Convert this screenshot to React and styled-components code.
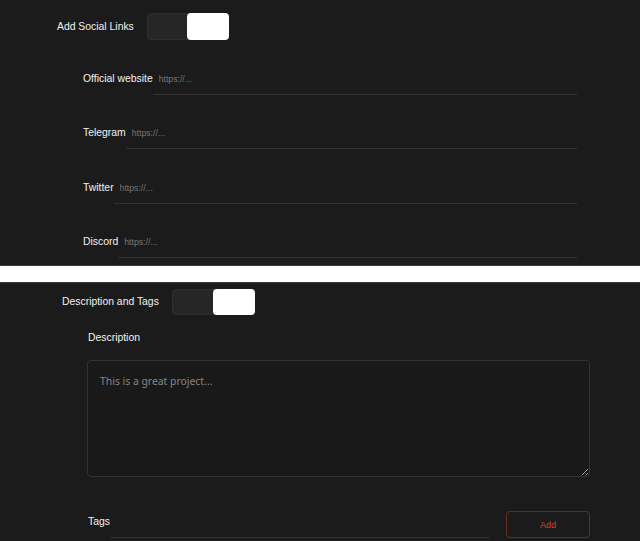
import React from "react";
import styled, { createGlobalStyle } from "styled-components";

const GlobalStyle = createGlobalStyle`
  html, body {
    margin: 0;
    padding: 0;
    background: #ffffff;
  }
  body {
    font-family: "Liberation Sans", Arial, sans-serif;
  }
`;

const Page = styled.div`
  width: 640px;
  display: flex;
  flex-direction: column;
  gap: 18px;
`;

const Panel = styled.section`
  background: #1b1b1b;
  display: flex;
  flex-direction: column;
  padding: ${(p) => p.$padding};
  height: ${(p) => p.$height};
  box-sizing: border-box;
  box-shadow: 0 0 0 1px #3a3a3a;
`;

const Header = styled.div`
  display: flex;
  align-items: center;
  gap: 13px;
`;

const HeaderTitle = styled.span`
  color: #f2f2f2;
  font-size: 10.4px;
  line-height: 12px;
`;

const Toggle = styled.div`
  width: ${(p) => p.$width}px;
  height: ${(p) => p.$height}px;
  box-sizing: border-box;
  background: #262626;
  border: 1px solid #2f2f2f;
  border-radius: 4px;
  display: flex;
  justify-content: flex-end;
`;

const Knob = styled.div`
  width: 52%;
  background: #ffffff;
  border-radius: 4px;
  margin: -1px -1px -1px 0;
  height: calc(100% + 2px);
`;

const LinkList = styled.div`
  display: flex;
  flex-direction: column;
  gap: 32.3px;
  margin-top: 33px;
  padding: 0 63px 0 26px;
`;

const LinkRow = styled.label`
  display: flex;
  align-items: flex-start;
`;

const LinkLabel = styled.span`
  color: #f2f2f2;
  font-size: 10.4px;
  line-height: 12px;
  white-space: nowrap;
`;

const LineInput = styled.input`
  flex: 1;
  min-width: 0;
  background: transparent;
  border: none;
  border-bottom: 1px solid #333333;
  outline: none;
  color: #dddddd;
  font-family: "Liberation Sans", Arial, sans-serif;
  font-size: 8.7px;
  line-height: 12px;
  height: 22px;
  box-sizing: border-box;
  padding: 0 6px 9px;

  &::placeholder {
    color: #777777;
  }
`;

const SubLabel = styled.div`
  color: #f2f2f2;
  font-size: 10.4px;
  line-height: 12px;
  margin: ${(p) => p.$margin};
`;

const TextArea = styled.textarea`
  display: block;
  width: 503px;
  height: 117px;
  box-sizing: border-box;
  margin-left: 25px;
  background: #191919;
  border: 1px solid #333333;
  border-radius: 4px;
  padding: 13px 12px;
  color: #dddddd;
  font-family: "Noto Sans", "Open Sans", sans-serif;
  font-size: 10.4px;
  line-height: 14px;
  outline: none;

  &::placeholder {
    color: #858585;
  }
`;

const TagsRow = styled.div`
  display: flex;
  align-items: flex-end;
  margin-top: 34px;
  padding-left: 26px;
  width: 528px;
  box-sizing: border-box;
`;

const TagsLabel = styled.span`
  color: #f2f2f2;
  font-size: 10.4px;
  line-height: 12px;
  padding-bottom: 10px;
`;

const TagInput = styled(LineInput)`
  height: 26px;
`;

const AddButton = styled.button`
  flex: none;
  width: 84px;
  height: 27px;
  margin-left: 16px;
  background: transparent;
  border: 1px solid #6a2a1e;
  border-radius: 4px;
  color: #e53b1d;
  font-family: "Liberation Sans", Arial, sans-serif;
  font-size: 9px;
  cursor: pointer;
`;

const links = ["Official website", "Telegram", "Twitter", "Discord"];

export default function App() {
  return (
    <>
      <GlobalStyle />
      <Page>
        <Panel $padding="13px 0 0 57px" $height="265px">
          <Header>
            <HeaderTitle>Add Social Links</HeaderTitle>
            <Toggle $width={82} $height={27}>
              <Knob />
            </Toggle>
          </Header>
          <LinkList>
            {links.map((name) => (
              <LinkRow key={name}>
                <LinkLabel>{name}</LinkLabel>
                <LineInput placeholder="https://..." />
              </LinkRow>
            ))}
          </LinkList>
        </Panel>
        <Panel $padding="6px 0 0 62px" $height="258px">
          <Header>
            <HeaderTitle>Description and Tags</HeaderTitle>
            <Toggle $width={83} $height={26}>
              <Knob />
            </Toggle>
          </Header>
          <SubLabel $margin="17px 0 16px 26px">Description</SubLabel>
          <TextArea placeholder="This is a great project..." />
          <TagsRow>
            <TagsLabel>Tags</TagsLabel>
            <TagInput />
            <AddButton>Add</AddButton>
          </TagsRow>
        </Panel>
      </Page>
    </>
  );
}
